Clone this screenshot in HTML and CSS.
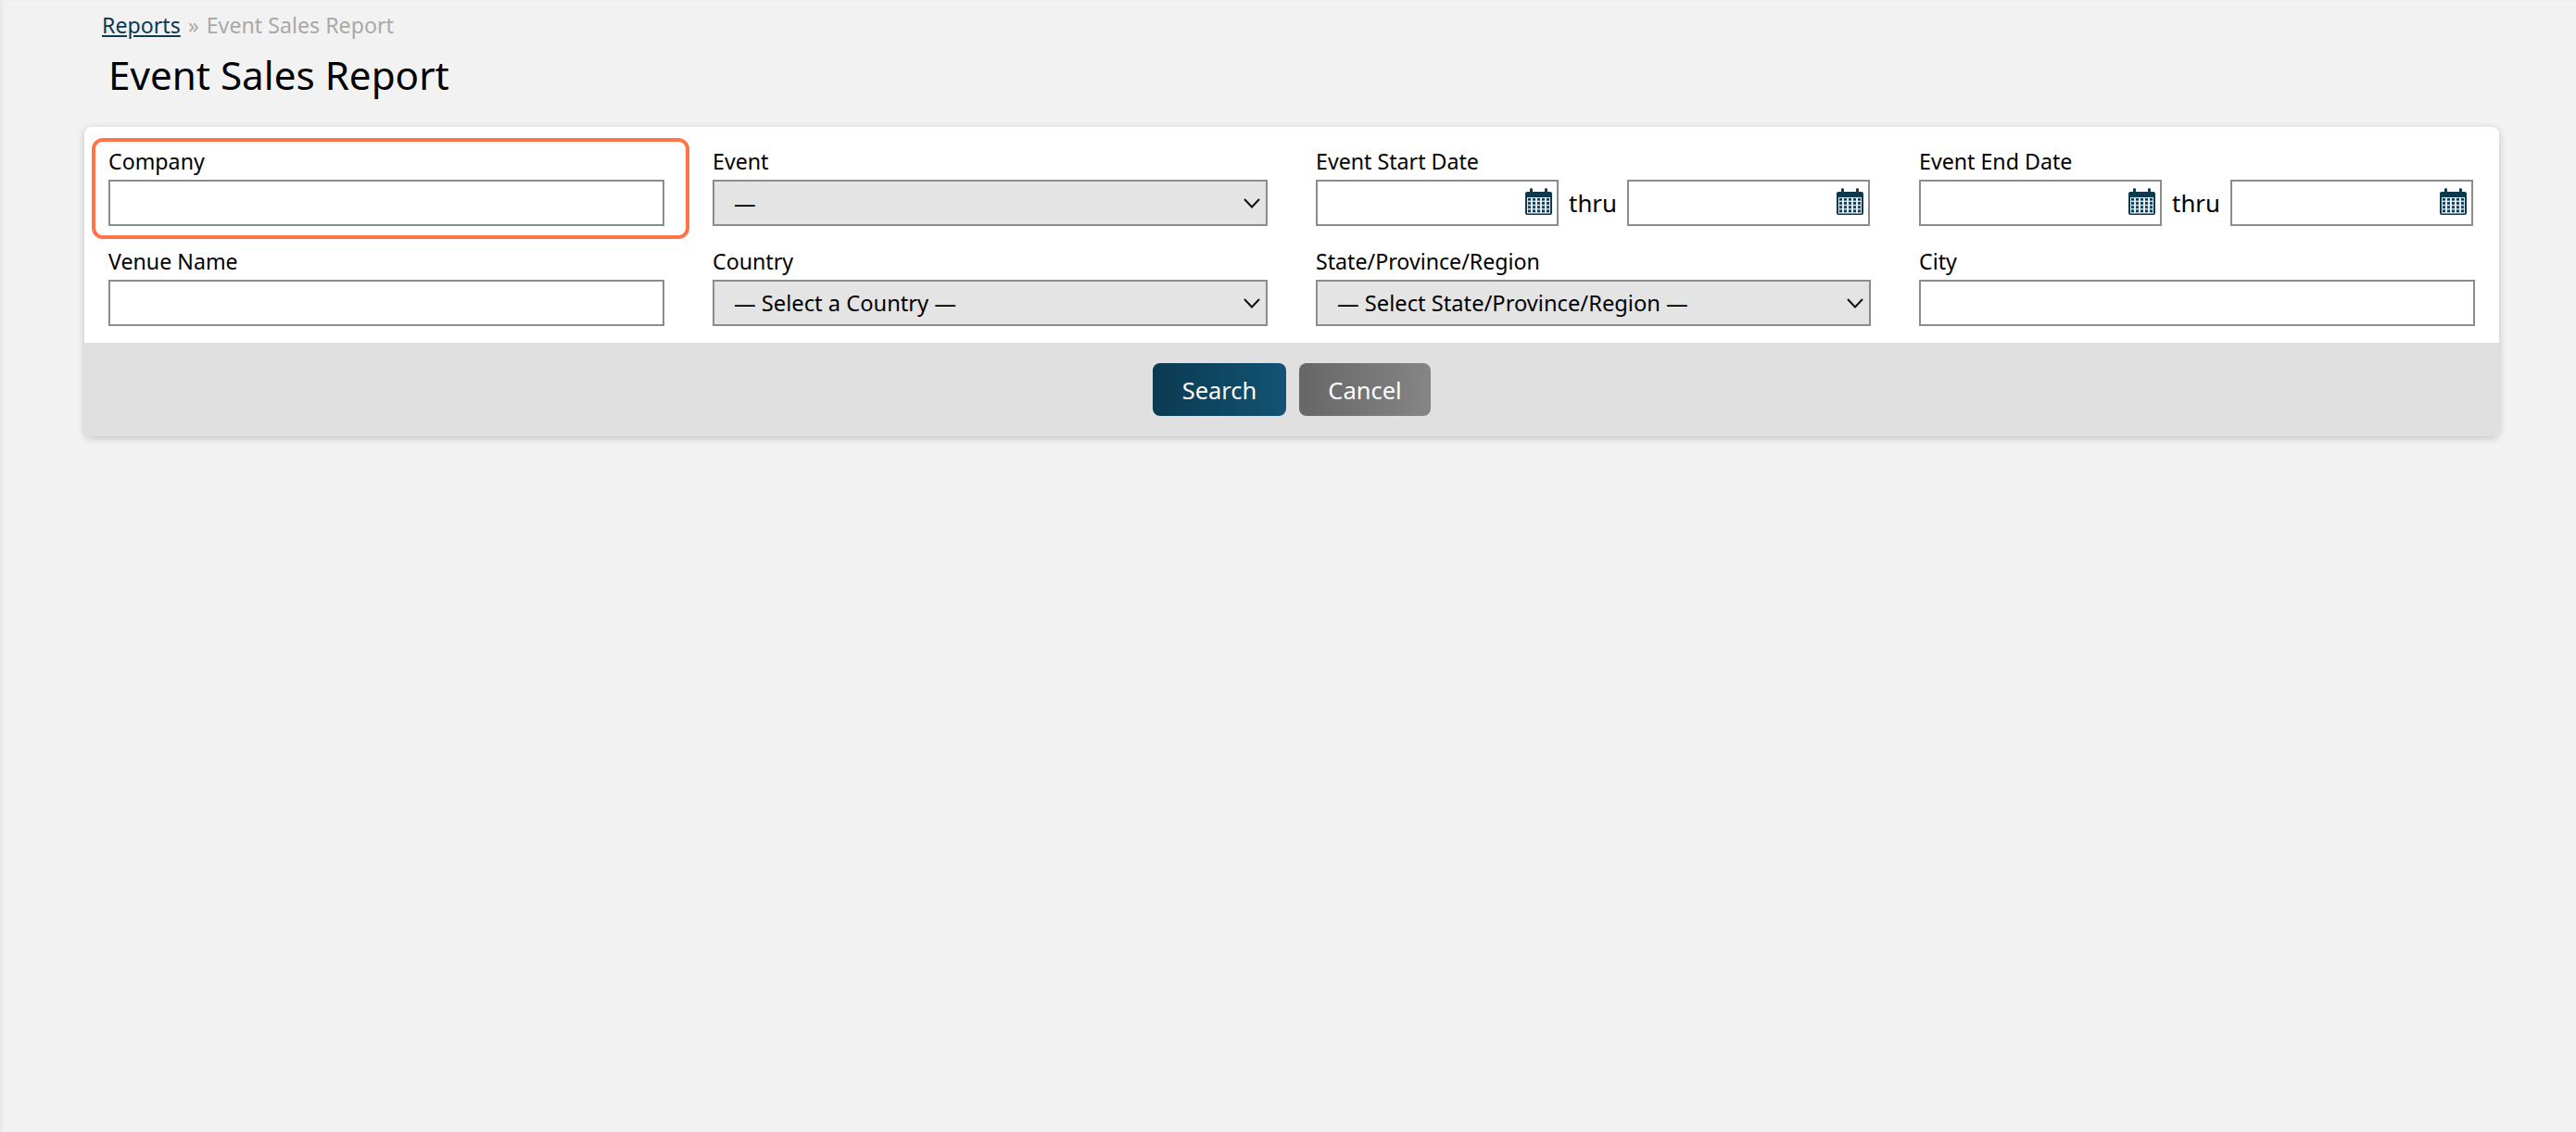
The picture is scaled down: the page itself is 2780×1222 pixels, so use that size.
FILE: index.html
```html
<!DOCTYPE html>
<html lang="en">
<head>
<meta charset="utf-8">
<title>Event Sales Report</title>
<link rel="stylesheet" href="styles.css">
</head>
<body>
<svg class="defs" width="0" height="0" aria-hidden="true">
  <defs>
    <pattern id="cal-grid" x="3" y="11" width="5" height="4.15" patternUnits="userSpaceOnUse">
      <rect width="3" height="2.7" fill="#0b3a51"/>
    </pattern>
    <symbol id="cal" viewBox="0 0 29 29">
      <path fill="#0b3a51" d="M5 1.5a1.5 1.5 0 0 1 3 0V4h13V1.5a1.5 1.5 0 0 1 3 0V4h3a2 2 0 0 1 2 2v21a2 2 0 0 1-2 2H2a2 2 0 0 1-2-2V6a2 2 0 0 1 2-2h3z"/>
      <rect x="2" y="10" width="25" height="17.5" fill="#e6ecef"/>
      <rect x="3" y="11" width="23" height="16" fill="url(#cal-grid)"/>
    </symbol>
    <symbol id="chev" viewBox="0 0 18 11">
      <path d="M1 1l8 8.5L17 1" fill="none" stroke="#111" stroke-width="2"/>
    </symbol>
  </defs>
</svg>
<main class="page">
  <nav class="crumbs"><a class="crumb-link" href="#">Reports</a> <span class="crumb-sep">»</span> Event Sales Report</nav>
  <h1 class="title">Event Sales Report</h1>
  <form class="panel">
    <div class="fields">
      <div class="field field-hl">
        <label class="label">Company</label>
        <input class="input" type="text">
      </div>
      <div class="field">
        <label class="label">Event</label>
        <div class="select-wrap">
          <select class="select"><option>—</option></select>
          <svg class="chev"><use href="#chev"/></svg>
        </div>
      </div>
      <div class="field">
        <label class="label">Event Start Date</label>
        <div class="dates">
          <div class="date"><input class="input" type="text"><svg class="cal"><use href="#cal"/></svg></div>
          <span class="thru">thru</span>
          <div class="date"><input class="input" type="text"><svg class="cal"><use href="#cal"/></svg></div>
        </div>
      </div>
      <div class="field">
        <label class="label">Event End Date</label>
        <div class="dates">
          <div class="date"><input class="input" type="text"><svg class="cal"><use href="#cal"/></svg></div>
          <span class="thru">thru</span>
          <div class="date"><input class="input" type="text"><svg class="cal"><use href="#cal"/></svg></div>
        </div>
      </div>
      <div class="field">
        <label class="label">Venue Name</label>
        <input class="input" type="text">
      </div>
      <div class="field">
        <label class="label">Country</label>
        <div class="select-wrap">
          <select class="select"><option>— Select a Country —</option></select>
          <svg class="chev"><use href="#chev"/></svg>
        </div>
      </div>
      <div class="field">
        <label class="label">State/Province/Region</label>
        <div class="select-wrap">
          <select class="select"><option>— Select State/Province/Region —</option></select>
          <svg class="chev"><use href="#chev"/></svg>
        </div>
      </div>
      <div class="field">
        <label class="label">City</label>
        <input class="input" type="text">
      </div>
    </div>
    <div class="actions">
      <button class="btn btn-primary" type="button">Search</button>
      <button class="btn btn-muted" type="button">Cancel</button>
    </div>
  </form>
</main>
</body>
</html>
```
FILE: styles.css
```css
*, *::before { box-sizing: border-box; }
html, body { height: 100%; }
body {
  margin: 0;
  background: #f2f2f2;
  color: #000;
  font-family: "Noto Sans", "Open Sans", sans-serif;
  font-size: 24px;
  overflow: hidden;
  box-shadow: inset 4px 0 4px -2px #e6e6e6;
}
.defs { display: block; height: 0; }
.page { padding: 10px 83px 0 91px; }
.crumbs { padding-left: 19px; height: 34px; line-height: 34px; font-size: 23.2px; color: #a9a9a9; }
.crumb-link { color: #0b3a51; text-decoration: underline; }
.crumb-sep { margin: 0 2px; }
.title {
  margin: 0;
  padding: 10px 0 0 26px;
  height: 93px;
  font-size: 42.2px;
  font-weight: 400;
  line-height: 54px;
}
.panel {
  background: #fff;
  border-radius: 8px;
  box-shadow: 0 2px 8px rgba(0,0,0,.2);
  overflow: hidden;
}
.fields {
  display: grid;
  grid-template-columns: 600px 599px 599px 1fr;
  column-gap: 52px;
  row-gap: 22px;
  padding: 21px 26px 18px;
}
.field { display: flex; flex-direction: column; min-width: 0; }
.field-hl { position: relative; }
.field-hl::before {
  content: "";
  position: absolute;
  left: -18px; right: -27px;
  top: -9px; height: 109px;
  border: 4px solid #ff7545;
  border-radius: 12px;
  pointer-events: none;
}
.label { display: block; height: 36px; line-height: 32px; font-size: 23.2px; }
.input {
  display: block;
  width: 100%;
  height: 50px;
  padding: 0 8px;
  border: 2px solid #8c8c8c;
  border-radius: 0;
  background: #fff;
  font: inherit;
}
.select-wrap { position: relative; height: 50px; }
.select {
  display: block;
  width: 100%;
  height: 50px;
  padding: 0 40px 0 21px;
  border: 2px solid #8c8c8c;
  border-radius: 0;
  background: #e4e4e4;
  color: #000;
  font: inherit;
  font-size: 23.7px;
  appearance: none;
}
.chev { position: absolute; right: 8px; top: 20px; width: 18px; height: 11px; }
.dates { display: flex; align-items: center; }
.date { position: relative; flex: 0 0 262px; }
.cal { position: absolute; right: 7px; top: 9px; width: 29px; height: 29px; }
.thru { flex: 0 0 74px; text-align: center; font-size: 25.8px; }
.actions {
  display: flex;
  justify-content: center;
  gap: 14px;
  height: 101px;
  padding-top: 22px;
  background: #e0e0e0;
}
.btn {
  height: 57px;
  border: 0;
  border-radius: 8px;
  color: #fff;
  font: inherit;
  font-size: 25.5px;
}
.btn-primary { width: 144px; background: linear-gradient(90deg, #0b3a51, #125374); }
.btn-muted { width: 142px; background: linear-gradient(90deg, #666, #858585); }
```
